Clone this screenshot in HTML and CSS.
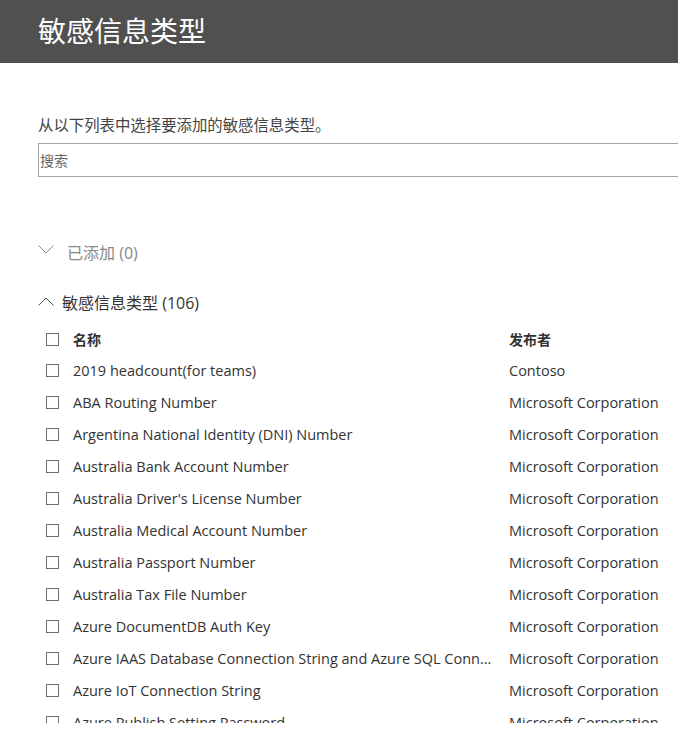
FILE: index.html
```html
<!DOCTYPE html>
<html lang="zh-CN">
<head>
<meta charset="utf-8">
<title>敏感信息类型</title>
<link rel="stylesheet" href="styles.css">
</head>
<body>
<header class="topbar">
  <h1 class="title">敏感信息类型</h1>
</header>
<main class="content">
  <p class="desc">从以下列表中选择要添加的敏感信息类型。</p>
  <input class="search" type="text" placeholder="搜索">

  <div class="group group-added">
    <svg class="chev chev-down" width="16" height="9" viewBox="0 0 16 9"><polyline points="0.5,0.5 8,8 15.5,0.5" fill="none" stroke="#8a8a8a" stroke-width="1"/></svg>
    <span class="group-label muted">已添加 (0)</span>
  </div>

  <div class="group group-types">
    <svg class="chev chev-up" width="16" height="9" viewBox="0 0 16 9"><polyline points="0.5,8.5 8,1 15.5,8.5" fill="none" stroke="#555" stroke-width="1"/></svg>
    <span class="group-label">敏感信息类型 (106)</span>
  </div>

  <div class="table">
    <div class="row head">
      <span class="cb"></span><span class="name">名称</span><span class="pub">发布者</span>
    </div>
    <div class="row"><span class="cb"></span><span class="name">2019 headcount(for teams)</span><span class="pub">Contoso</span></div>
    <div class="row"><span class="cb"></span><span class="name">ABA Routing Number</span><span class="pub">Microsoft Corporation</span></div>
    <div class="row"><span class="cb"></span><span class="name">Argentina National Identity (DNI) Number</span><span class="pub">Microsoft Corporation</span></div>
    <div class="row"><span class="cb"></span><span class="name">Australia Bank Account Number</span><span class="pub">Microsoft Corporation</span></div>
    <div class="row"><span class="cb"></span><span class="name">Australia Driver's License Number</span><span class="pub">Microsoft Corporation</span></div>
    <div class="row"><span class="cb"></span><span class="name">Australia Medical Account Number</span><span class="pub">Microsoft Corporation</span></div>
    <div class="row"><span class="cb"></span><span class="name">Australia Passport Number</span><span class="pub">Microsoft Corporation</span></div>
    <div class="row"><span class="cb"></span><span class="name">Australia Tax File Number</span><span class="pub">Microsoft Corporation</span></div>
    <div class="row"><span class="cb"></span><span class="name">Azure DocumentDB Auth Key</span><span class="pub">Microsoft Corporation</span></div>
    <div class="row"><span class="cb"></span><span class="name">Azure IAAS Database Connection String and Azure SQL Connection String</span><span class="pub">Microsoft Corporation</span></div>
    <div class="row"><span class="cb"></span><span class="name">Azure IoT Connection String</span><span class="pub">Microsoft Corporation</span></div>
    <div class="row"><span class="cb"></span><span class="name">Azure Publish Setting Password</span><span class="pub">Microsoft Corporation</span></div>
    <div class="row"><span class="cb"></span><span class="name">Azure Redis Cache Connection String</span><span class="pub">Microsoft Corporation</span></div>
  </div>
</main>
</body>
</html>
```

FILE: styles.css
```css
html, body {
  margin: 0;
  padding: 0;
  background: #fff;
  overflow: hidden;
}
body {
  font-family: "Open Sans", "Noto Sans CJK SC", sans-serif;
  color: #333;
  width: 678px;
  height: 737px;
}
.topbar {
  background: #505050;
  height: 63px;
  display: flex;
  align-items: center;
  padding-left: 38px;
}
.title {
  margin: 0;
  font-family: "Noto Sans CJK SC", sans-serif;
  font-weight: 400;
  font-size: 28px;
  line-height: 34px;
  color: #fff;
  position: relative;
  top: -2px;
}
.content {
  padding-left: 38px;
}
.desc {
  margin: 51px 0 0 0;
  font-family: "Noto Sans CJK SC", sans-serif;
  font-size: 15.4px;
  line-height: 20px;
  color: #444;
}
.search {
  display: block;
  box-sizing: border-box;
  margin-top: 9px;
  width: 720px;
  height: 34px;
  border: 1px solid #a6a6a6;
  padding: 0 0 0 1px;
  font-family: "Noto Sans CJK SC", sans-serif;
  font-size: 14px;
  outline: none;
}
.search::placeholder {
  color: #666;
}
.group {
  display: flex;
  align-items: center;
  height: 32px;
  font-size: 16px;
}
.group-added {
  margin-top: 59px;
  gap: 13px;
}
.group-types {
  margin-top: 18px;
  gap: 8px;
}
.chev-down {
  position: relative;
  top: -3px;
}
.chev-up {
  position: relative;
  top: -1px;
}
.group-label {
  font-family: "Open Sans", "Noto Sans CJK SC", sans-serif;
  color: #333;
}
.muted {
  color: #888;
}
.table {
  margin-top: 6px;
  height: 399px;
  overflow: hidden;
}
.row {
  display: grid;
  grid-template-columns: 13px 422px 1fr;
  column-gap: 14px;
  align-items: center;
  height: 32px;
  padding-left: 8px;
  font-size: 14.5px;
  color: #333;
}
.row.head {
  height: 30px;
  font-family: "Noto Sans CJK SC", sans-serif;
  font-weight: 700;
  font-size: 14px;
}
.cb {
  box-sizing: border-box;
  width: 13px;
  height: 13px;
  border: 1px solid #6e6e6e;
  background: #fff;
}
.name, .pub {
  white-space: nowrap;
  overflow: hidden;
  text-overflow: ellipsis;
}
```
